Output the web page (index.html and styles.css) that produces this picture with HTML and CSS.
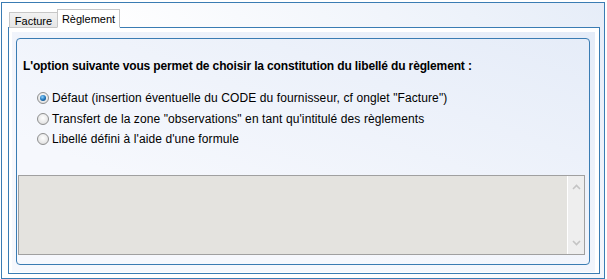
FILE: index.html
```html
<!DOCTYPE html>
<html lang="fr">
<head>
<meta charset="utf-8">
<link rel="stylesheet" href="styles.css">
</head>
<body>
<div class="frame">
  <div class="tabs">
    <div class="tab">Facture</div>
    <div class="tab active">Règlement</div>
  </div>
  <div class="page">
    <div class="panel">
      <div class="group">
        <p class="heading">L'option suivante vous permet de choisir la constitution du libellé du règlement :</p>
        <div class="options">
          <label class="opt"><span class="radio checked"></span>Défaut (insertion éventuelle du CODE du fournisseur, cf onglet "Facture")</label>
          <label class="opt"><span class="radio"></span>Transfert de la zone "observations" en tant qu'intitulé des règlements</label>
          <label class="opt"><span class="radio"></span>Libellé défini à l'aide d'une formule</label>
        </div>
        <div class="memo">
          <div class="memo-body"></div>
          <div class="scroll">
            <svg class="arrow" width="9" height="6" viewBox="0 0 9 6"><path d="M1 5 L4.5 1.5 L8 5" fill="none" stroke="#c4c4c4" stroke-width="1.6"/></svg>
            <svg class="arrow" width="9" height="6" viewBox="0 0 9 6"><path d="M1 1 L4.5 4.5 L8 1" fill="none" stroke="#c4c4c4" stroke-width="1.6"/></svg>
          </div>
        </div>
      </div>
    </div>
  </div>
</div>
</body>
</html>
```
FILE: styles.css
```css
* { box-sizing: border-box; }
html, body { margin: 0; padding: 0; background: #ffffff; }
body {
  font-family: "Liberation Sans", Arial, sans-serif;
  font-size: 12px;
  color: #000;
}
.frame {
  margin: 2px 0 0 1px;
  width: 604px;
  height: 277px;
  border: 1px solid #3a7cb3;
  background: linear-gradient(225deg, #e6edf8 0%, #ffffff 60%);
  padding: 6px 4px 4px 6px;
  display: flex;
  flex-direction: column;
}
.tabs {
  display: flex;
  align-items: flex-end;
  height: 19px;
  padding-left: 1px;
  margin-bottom: -1px;
  position: relative;
  z-index: 1;
}
.tab {
  height: 16px;
  padding: 1px 0 0 0;
  width: 49px;
  text-align: center;
  border: 1px solid #c7c7c7;
  background: linear-gradient(#f2f2f2, #e6e6e6);
  font-size: 11px;
  line-height: 14px;
  margin-right: -1px;
}
.tab.active {
  height: 19px;
  width: 63px;
  padding: 2px 0 0 0;
  background: #ffffff;
  border-bottom-color: #ffffff;
}
.page {
  flex: 1;
  border: 1px solid #3a7cb3;
  background: #ffffff;
  padding: 4px 4px 1px 3px;
  display: flex;
}
.panel {
  flex: 1;
  background: linear-gradient(200deg, #e5ecf8 0%, #f6f8fd 70%);
  padding: 6px 5px 7px 4px;
  display: flex;
}
.group {
  flex: 1;
  border: 1px solid #3a7cb3;
  border-radius: 4px;
  padding: 20px 4px 9px 1px;
  display: flex;
  flex-direction: column;
}
.heading {
  margin: 0 0 0 5px;
  font-weight: bold;
  line-height: 14px;
  letter-spacing: -0.14px;
}
.options {
  margin: 18px 0 0 19px;
  display: flex;
  flex-direction: column;
  gap: 6.5px;
  letter-spacing: 0.1px;
}
.opt {
  display: flex;
  align-items: center;
  height: 14px;
  line-height: 14px;
  gap: 3px;
}
.radio {
  width: 12px;
  height: 12px;
  border-radius: 50%;
  border: 1px solid #8e8f8f;
  background: radial-gradient(circle at 50% 40%, #ffffff 0%, #e8e8e8 60%, #d0d0d0 100%);
  position: relative;
  flex: none;
}
.radio.checked::after {
  content: "";
  position: absolute;
  left: 2px;
  top: 2px;
  width: 6px;
  height: 6px;
  border-radius: 50%;
  background: radial-gradient(circle at 40% 35%, #8fd3ff 0%, #1a6fb5 55%, #0d3e6b 100%);
}
.memo {
  margin-top: auto;
  height: 80px;
  border: 1px solid #a0a0a0;
  background: #e4e3df;
  display: flex;
}
.memo-body { flex: 1; }
.scroll {
  width: 17px;
  background: #eeeeee;
  border-left: 1px solid #ffffff;
  display: flex;
  flex-direction: column;
  justify-content: space-between;
  align-items: center;
  padding: 8px 0 8px 0;
}
.arrow { display: block; }
```
